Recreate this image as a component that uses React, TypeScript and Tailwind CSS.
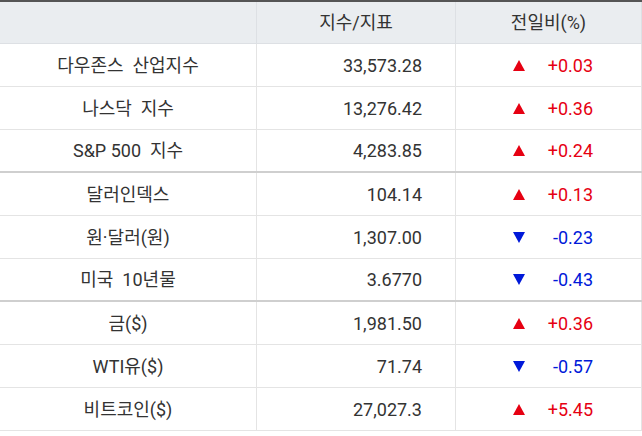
import React from "react";

type Row = { name: string; value: string; change: string; up: boolean };

const groups: Row[][] = [
  [
    { name: "다우존스  산업지수", value: "33,573.28", change: "+0.03", up: true },
    { name: "나스닥  지수", value: "13,276.42", change: "+0.36", up: true },
    { name: "S&P 500  지수", value: "4,283.85", change: "+0.24", up: true },
  ],
  [
    { name: "달러인덱스", value: "104.14", change: "+0.13", up: true },
    { name: "원·달러(원)", value: "1,307.00", change: "-0.23", up: false },
    { name: "미국  10년물", value: "3.6770", change: "-0.43", up: false },
  ],
  [
    { name: "금($)", value: "1,981.50", change: "+0.36", up: true },
    { name: "WTI유($)", value: "71.74", change: "-0.57", up: false },
    { name: "비트코인($)", value: "27,027.3", change: "+5.45", up: true },
  ],
];

const font = { fontFamily: '"Roboto", "Noto Sans CJK KR", sans-serif' };

export default function App() {
  return (
    <main
      className="w-[642px] h-[436px] bg-white text-[18px] text-[#333]"
      style={font}
    >
      <div className="flex h-[44px] border-t-2 border-[#555] border-b border-b-[#dde0e4] bg-[#eaedf0]">
        <div className="w-[256px]" />
        <div className="w-[199px] flex items-center justify-center border-l border-[#dde0e4]">
          지수/지표
        </div>
        <div className="flex-1 flex items-center justify-center border-l border-[#dde0e4] border-r">
          전일비(%)
        </div>
      </div>
      {groups.map((rows, gi) => (
        <div key={gi}>
          {rows.map((r, i) => {
            const last = i === rows.length - 1 && gi < groups.length - 1;
            return (
              <div
                key={r.name}
                className={
                  last
                    ? "flex h-[43px] border-b-2 border-[#cfcfcf]"
                    : "flex h-[43px] border-b border-[#e4e4e4]"
                }
              >
                <div className="w-[256px] flex items-center justify-center whitespace-pre">
                  {r.name}
                </div>
                <div className="w-[199px] flex items-center justify-end pr-[33px] border-l border-[#e4e4e4]">
                  {r.value}
                </div>
                <div
                  className={
                    r.up
                      ? "flex-1 flex items-center pl-[57px] border-l border-r border-[#e4e4e4] text-[#e60012]"
                      : "flex-1 flex items-center pl-[57px] border-l border-r border-[#e4e4e4] text-[#0019d9]"
                  }
                >
                  <svg width="12" height="11" viewBox="0 0 12 11">
                    {r.up ? (
                      <path d="M6 0 L12 11 L0 11 Z" fill="currentColor" />
                    ) : (
                      <path d="M0 0 L12 0 L6 11 Z" fill="currentColor" />
                    )}
                  </svg>
                  <span className="w-[68px] text-right">{r.change}</span>
                </div>
              </div>
            );
          })}
        </div>
      ))}
    </main>
  );
}
